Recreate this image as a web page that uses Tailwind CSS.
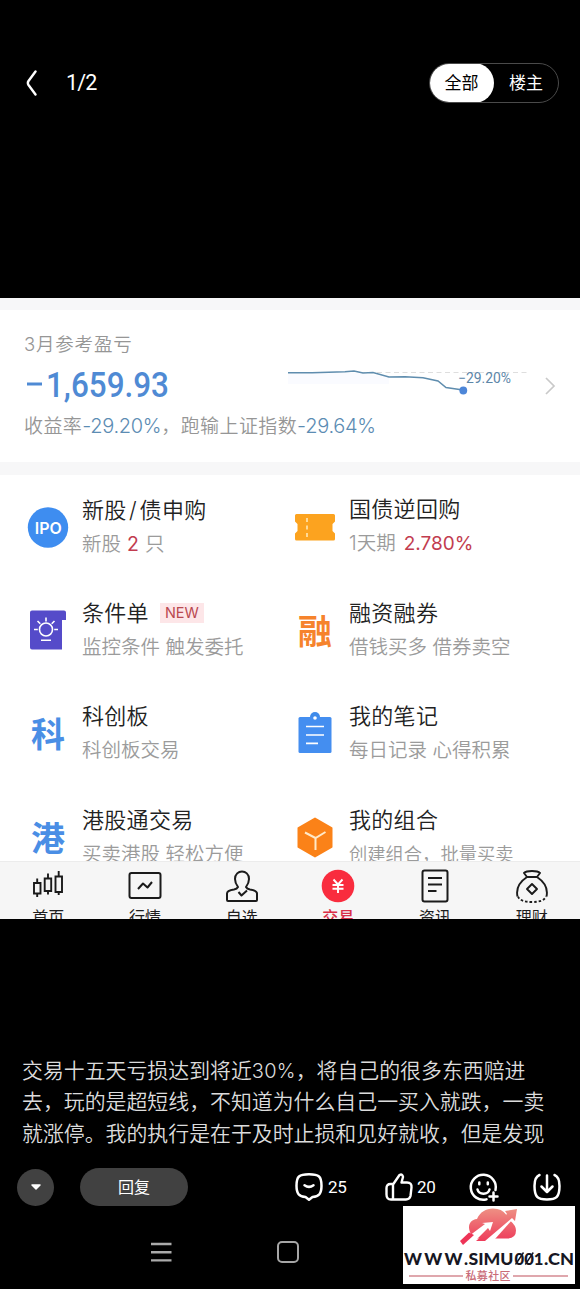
<!DOCTYPE html>
<html lang="zh-CN">
<head>
<meta charset="utf-8">
<title>1/2</title>
<script src="https://cdn.jsdelivr.net/npm/@tailwindcss/browser@4"></script>
</head>
<body class="bg-black">
<div class="relative flex h-[1289px] w-[580px] flex-col overflow-hidden bg-black font-['Roboto','Noto_Sans_CJK_SC',sans-serif] whitespace-nowrap">

  <!-- Viewer header -->
  <header class="flex h-[298px] shrink-0 items-start pt-[63px] pr-[21px] pl-[26px]">
    <div class="flex h-10 items-center">
      <svg class="h-[28px] w-[14px]" viewBox="0 0 14 28" fill="none" stroke="#fff" stroke-width="2.4" stroke-linecap="round" stroke-linejoin="round"><path d="M9.500 2.500 2.500 12q-1.300 2 0 4l7 9.500"/></svg>
      <span class="ml-[26px] pt-px text-[21.500px] tracking-[-0.8px] text-white">1/2</span>
    </div>
    <div class="ml-auto flex h-10 w-[130px] overflow-hidden rounded-full border border-[#4a4a4a] text-[17px]">
      <span class="-my-px -ml-px flex w-[65px] items-center justify-center rounded-full bg-white pt-[2px] text-black">全部</span>
      <span class="flex flex-1 items-center justify-center pt-[2px] text-white">楼主</span>
    </div>
  </header>

  <!-- Brokerage app picture -->
  <main class="flex h-[621px] shrink-0 flex-col overflow-hidden bg-white font-['Inter','Noto_Sans_CJK_SC',sans-serif]">
    <div class="h-[12px] shrink-0 bg-[#f7f7f9]"></div>
    <section class="flex h-[152px] shrink-0 pl-[24px]">
      <div class="w-[264px] pt-[19px]">
        <div class="h-[30px] text-[18.500px] leading-[30px] font-[350] tracking-[0.8px] text-[#969696]">3月参考盈亏</div>
        <svg class="h-[50px] w-[150px]" viewBox="0 0 150 50" font-family="Roboto, sans-serif" font-weight="500" font-size="35" fill="#4f8ad4"><path d="M3 23.500h15v3H3z"/><text x="22" y="37.500" textLength="123" lengthAdjust="spacingAndGlyphs">1,659.93</text></svg>
        <div class="h-[34px] text-[19px] leading-[34px] font-[350] tracking-[0.4px] text-[#969696]">收益率<span class="text-[20px] tracking-[-0.300px] text-[#5c8cb3]">-29.20%</span>，跑输上证指数<span class="text-[20px] tracking-[-0.300px] text-[#5c8cb3]">-29.64%</span></div>
      </div>
      <svg class="mt-[50px] h-[44px] w-[280px]" viewBox="288 360 280 44" fill="none">
        <path d="M288 373h70l31 4v7H288z" fill="#fafbff"/>
        <path d="M360 372.500H530" stroke="#dedede" stroke-dasharray="5 3.500"/>
        <path d="M288 372.700H312L345 371.800L354 371L363 373L373 372.500L389 377L405 376.700L423 377.800L438 381L446 387.500L463 390" stroke="#5f8dae" stroke-width="1.500"/>
        <circle cx="463.300" cy="390.500" r="3.900" fill="#4d86d8"/>
        <text x="458" y="382.500" textLength="53" lengthAdjust="spacingAndGlyphs" font-family="Roboto, sans-serif" font-size="14" fill="#5c86a8">−29.20%</text>
        <path d="m546 378 8 8-8 8" stroke="#c9c9c9" stroke-width="1.700"/>
      </svg>
    </section>
    <div class="h-[13px] shrink-0 bg-[#f7f7f8]"></div>

    <!-- Feature grid -->
    <section class="grid h-[386px] shrink-0 auto-rows-[103.300px] grid-cols-[267px_1fr] overflow-hidden pl-[24px] text-[22px] leading-[34px] text-[#222]">
      <div class="flex items-center gap-[10px]">
        <svg class="size-12" viewBox="0 0 48 48"><circle cx="24" cy="24.500" r="20.200" fill="#3e8df0"/><text x="24.300" y="30.500" text-anchor="middle" textLength="27" lengthAdjust="spacingAndGlyphs" font-size="16.500" font-weight="600" fill="#fff">IPO</text></svg>
        <div class="font-[350]"><div class="tracking-[0.3px]">新股<span class="px-[2.500px]">/</span>债申购</div><div class="text-[19.500px] text-[#9b9b9b]">新股<span class="px-[6px] font-normal text-[#c23c4f]">2</span>只</div></div>
      </div>
      <div class="flex items-center gap-[10px]">
        <svg class="size-12" viewBox="0 0 48 48"><path d="M5.500 11h37q1.500 0 1.500 1.500V18.500l-2.500 2.500v7l2.500 2.500V36q0 1.500-1.500 1.500h-37Q4 37.500 4 36v-5.500L6.500 28v-7L4 18.500v-6Q4 11 5.500 11Z" fill="#fca31f"/><path d="M16 15v20" stroke="#ffe3ac" stroke-width="1.700" stroke-dasharray="4 3.500"/></svg>
        <div class="font-[350]"><div class="tracking-[0.3px]">国债逆回购</div><div class="text-[19.500px] text-[#9b9b9b]">1天期<span class="ml-[8px] text-[19px] font-normal text-[#c23c4f]">2.780%</span></div></div>
      </div>
      <div class="flex items-center gap-[10px]">
        <svg class="size-12" viewBox="0 0 48 48"><path d="M8 4.500h32q2 0 2 2V14h-4v29.500H8q-2 0-2-2v-35q0-2 2-2Z" fill="#554bc9"/><g fill="none" stroke="#fff" stroke-width="1.600"><circle cx="22" cy="23.500" r="6.500"/><path d="M17 34.300h10M22 11.500v4M13.500 15l2.800 2.800M30.500 15l-2.800 2.800M10 23.500h3.800M30.200 23.500H34"/></g></svg>
        <div class="font-[350]"><div class="flex items-center tracking-[0.3px]">条件单<span class="ml-[11px] flex h-[20px] w-[44px] items-center justify-center bg-[#fde6e8] text-[14.500px] leading-[20px] font-normal tracking-[0px] text-[#b94950]">NEW</span></div><div class="text-[19.500px] text-[#9b9b9b]">监控条件 触发委托</div></div>
      </div>
      <div class="flex items-center gap-[10px]">
        <span class="w-12 pt-[4px] text-center text-[34px] font-bold text-[#f6832c]">融</span>
        <div class="font-[350]"><div class="tracking-[0.3px]">融资融券</div><div class="text-[19.500px] text-[#9b9b9b]">借钱买多 借券卖空</div></div>
      </div>
      <div class="flex items-center gap-[10px]">
        <span class="w-12 pt-[4px] text-center text-[34px] font-bold text-[#4a8ee5]">科</span>
        <div class="font-[350]"><div class="tracking-[0.3px]">科创板</div><div class="text-[19.500px] text-[#9b9b9b]">科创板交易</div></div>
      </div>
      <div class="flex items-center gap-[10px]">
        <svg class="size-12" viewBox="0 0 48 48"><circle cx="24" cy="8" r="5" fill="#3f8bea"/><rect x="7.500" y="8" width="33" height="36" rx="1.500" fill="#448ef0"/><circle cx="24" cy="9" r="1.800" fill="#fff"/><path d="M15 17.500h18M15 26h18M15 34.300h12" stroke="#fff" stroke-width="1.700"/></svg>
        <div class="font-[350]"><div class="tracking-[0.3px]">我的笔记</div><div class="text-[19.500px] text-[#9b9b9b]">每日记录 心得积累</div></div>
      </div>
      <div class="flex items-center gap-[10px]">
        <span class="w-12 pt-[4px] text-center text-[34px] font-bold text-[#4a8ee5]">港</span>
        <div class="font-[350]"><div class="tracking-[0.3px]">港股通交易</div><div class="text-[19.500px] text-[#9b9b9b]">买卖港股 轻松方便</div></div>
      </div>
      <div class="flex items-center gap-[10px]">
        <svg class="size-12" viewBox="0 0 48 48"><path d="M24 5.500 40.500 15v19L24 43.500 7.500 34V15Z" fill="#fb8218" stroke="#fb8218" stroke-width="2" stroke-linejoin="round"/><path d="m14 19.500 10.500 5.500 10-6M24.500 25v12" fill="none" stroke="#ffe9c8" stroke-width="2"/></svg>
        <div class="font-[350]"><div class="tracking-[0.3px]">我的组合</div><div class="text-[18.300px] text-[#9b9b9b]">创建组合，批量买卖</div></div>
      </div>
    </section>

    <!-- App tab bar -->
    <nav class="grid h-[58px] shrink-0 grid-cols-6 overflow-hidden border-t border-[#ececec] bg-[#f6f6f6] text-[16px] leading-[24px] text-[#1e1e1e]">
      <div class="flex flex-col items-center gap-px pt-[6px]"><svg class="h-[36px] w-[36px] shrink-0" viewBox="0 0 36 36" fill="none" stroke="#1b1b1b" stroke-width="1.900"><path d="M4 15h6.500v10.500H4zM14.700 10.500h6.500v12.500h-6.500zM25.500 8.500H32v15.500h-6.500zM7.200 10.500V15M7.200 25.500v3.500M18 5.500v5M18 23v3.500M28.700 3v5.500M28.700 24v3"/></svg><span class="h-6 shrink-0">首页</span></div>
      <div class="flex flex-col items-center gap-px pt-[6px]"><svg class="h-[36px] w-[36px] shrink-0" viewBox="0 0 36 36" fill="none" stroke="#1b1b1b" stroke-width="2" stroke-linejoin="round"><rect x="2.500" y="5" width="31" height="25" rx="2"/><path d="m11 21 5-5.500 4.500 4L25 14"/></svg><span class="h-6 shrink-0">行情</span></div>
      <div class="flex flex-col items-center gap-px pt-[6px]"><svg class="h-[36px] w-[36px] shrink-0" viewBox="0 0 36 36" fill="none" stroke="#1b1b1b" stroke-width="2" stroke-linejoin="round"><path d="M14 19Q11 15 11 11c0-10 14-10 14 0q0 4-3 8 1 2 4 2.500 7 1 7 4V32q0 1-1 1H4q-1 0-1-1v-6.500q0-3 7-4 3-.5 4-2.500Z"/><path d="m14.500 24 3 3.500 5.500-5"/></svg><span class="h-6 shrink-0">自选</span></div>
      <div class="flex flex-col items-center gap-px pt-[6px] font-medium text-[#d92e47]"><svg class="h-[36px] w-[36px] shrink-0" viewBox="0 0 36 36"><circle cx="18" cy="18" r="16.300" fill="#f92c3e"/><path d="m13.500 11.500 4.500 5 4.500-5M12.500 17h11M12.500 20.800h11M18 16.500v8.500" fill="none" stroke="#fff" stroke-width="1.900"/></svg><span class="h-6 shrink-0">交易</span></div>
      <div class="flex flex-col items-center gap-px pt-[6px]"><svg class="h-[36px] w-[36px] shrink-0" viewBox="0 0 36 36" fill="none" stroke="#1b1b1b" stroke-width="2"><rect x="5.500" y="2.500" width="25" height="31" rx="2"/><path d="M11 10h14M11 16.500h14M11 23h8.500"/></svg><span class="h-6 shrink-0">资讯</span></div>
      <div class="flex flex-col items-center gap-px pt-[6px]"><svg class="h-[36px] w-[36px] shrink-0" viewBox="0 0 36 36" fill="none" stroke="#1b1b1b" stroke-width="1.900" stroke-linejoin="round"><path d="m13 9-3-4q2-2 8-2t8 2l-3 4ZM13 9Q1 17 3.500 28.500M23 9q12 8 9.500 19.500"/><path d="M4 28.500Q6 34 18 34t14-5.500" stroke-dasharray="2.500 2"/><path d="m18 16 5 5-5 5-5-5Z"/></svg><span class="h-6 shrink-0">理财</span></div>
    </nav>
  </main>

  <!-- Post text -->
  <section class="mt-[137px] h-[93px] shrink-0 pl-[22px] text-[20.900px] leading-[31.300px] font-[350] text-[#dcdcdc]">
    <p>交易十五天亏损达到将近<span class="font-['Inter'] text-[20px] font-light tracking-[0.2px]">30%</span>，将自己的很多东西赔进</p>
    <p>去，玩的是超短线，不知道为什么自己一买入就跌，一卖</p>
    <p>就涨停。我的执行是在于及时止损和见好就收，但是发现</p>
  </section>

  <!-- Actions -->
  <section class="mt-[18px] flex h-[40px] shrink-0 items-center pl-[17px] text-[17px] text-white">
    <span class="flex size-[37px] items-center justify-center rounded-full bg-[#414141]"><svg class="h-[8px] w-[12px]" viewBox="0 0 12 8"><path d="M2 2h8L6 6Z" fill="#fff" stroke="#fff" stroke-width="1.500" stroke-linejoin="round"/></svg></span>
    <span class="ml-[26px] flex h-[38px] w-[108px] items-center justify-center rounded-full bg-[#414141] pt-px text-[16px]">回复</span>
    <svg class="ml-[106px] size-[30px]" viewBox="0 0 30 30" fill="none" stroke="#fff" stroke-width="2.500" stroke-linecap="round" stroke-linejoin="round"><path d="M15 2.300c10 0 12.500 2 12.500 11.500 0 8-2.500 10.700-9 11.200L15 27.800 11.500 25C5 24.500 2.500 21.800 2.500 13.800 2.500 4.300 5 2.300 15 2.300Z"/><path d="M10.500 13.300q4.500 3.200 9 0"/></svg>
    <span class="ml-[4px] w-[21px] pt-[2px] text-[17px] tracking-[-0.3px]">25</span>
    <svg class="ml-[35px] size-[30px]" viewBox="0 0 30 30" fill="none" stroke="#fff" stroke-width="2.400" stroke-linecap="round" stroke-linejoin="round"><path d="M9 12.500 15.500 3q3-1.500 3.500 2l-1.500 5.500H23q5 0 4.500 5L26.500 24q-1 3.500-4.500 3.500H7q-4.500 0-4.500-5V16q0-4 4-4H9v15"/></svg>
    <span class="ml-[3px] w-[20px] pt-[2px] text-[17px] tracking-[-0.3px]">20</span>
    <svg class="ml-[31px] size-[32px]" viewBox="0 0 32 32" fill="none" stroke="#fff" stroke-width="2.500" stroke-linecap="round"><path d="M18.500 28.400A12.500 12.500 0 1 1 27.500 19"/><path d="M9.500 18.500c1.500 5.500 10.500 5.500 12 0M11.300 11.500v1.800M19.800 11.500v1.800M25.500 21.500v8M21.500 25.500h8"/></svg>
    <svg class="ml-[32px] size-[30px]" viewBox="0 0 30 30" fill="none" stroke="#fff" stroke-width="2.500" stroke-linecap="round" stroke-linejoin="round"><path d="M7.500 3Q2.500 5 2.500 14c0 11 3 13.500 12.500 13.500S27.500 25 27.500 14q0-9-5-11M15 3.500V19.500M9.500 14.500l5.500 5.500 5.500-5.500"/></svg>
  </section>

  <!-- System navigation -->
  <div class="mt-[32px] flex h-[26px] shrink-0 items-center pl-[150px]">
    <svg class="h-[22px] w-[22px]" viewBox="0 0 22 22" stroke="#aaa" stroke-width="2.400"><path d="M1 3h20.500M1 11.200h20.500M1 19.400h20.500"/></svg>
    <span class="ml-[105px] size-[22px] rounded-[5px] border-2 border-[#a6a6a6]"></span>
  </div>

  <!-- Site badge over the corner -->
  <div class="absolute top-[1206px] left-[403px] h-[78px] w-[172px] bg-white">
    <svg class="size-full" viewBox="0 0 172 78">
      <defs><linearGradient id="cloud" gradientUnits="userSpaceOnUse" x1="0" y1="2" x2="0" y2="38"><stop stop-color="#ee9184"/><stop offset="1" stop-color="#ee3457"/></linearGradient></defs>
      <path d="M68 28C64 21 66 14 74 13 77 6 83 2.500 90 2.500q9 0 13 6l4 6q6 5 6 10 0 8-9 8H73Z" fill="url(#cloud)"/>
      <path d="M81 35 106 10 110 13 92 33Z" fill="#fff"/>
      <path d="M73 35 104 8 102 5 114 3 112 15 109 12 82 35Z" fill="url(#cloud)"/>
      <path d="M66 30 82 18 79 17 90 16 87 25 85 22 73 34Z" fill="#fff"/>
      <path d="M57 35 66 26.500 71 29 60 39Z" fill="#ee3457"/>
      <g font-family="Lato, sans-serif" font-weight="900" font-size="17" fill="#171723">
        <text x="1" y="58.500" textLength="64" lengthAdjust="spacing">WWW.</text>
        <text x="65.500" y="58.500" textLength="45" lengthAdjust="spacingAndGlyphs">SIMU</text>
        <text x="111.500" y="58.500" textLength="29" lengthAdjust="spacingAndGlyphs">001</text>
        <text x="141" y="58.500" textLength="30" lengthAdjust="spacingAndGlyphs">.CN</text>
      </g>
      <path d="m112.500 58.500 8-12M122.300 58.500l8-12" stroke="#171723" stroke-width="1.400"/>
      <path d="M6 70h54M110 70h55" stroke="#d58b92" stroke-width="1.300"/>
      <text x="62.500" y="74.200" textLength="45" font-size="11" font-weight="500" fill="#c96c78">私募社区</text>
    </svg>
  </div>
</div>
</body>
</html>
